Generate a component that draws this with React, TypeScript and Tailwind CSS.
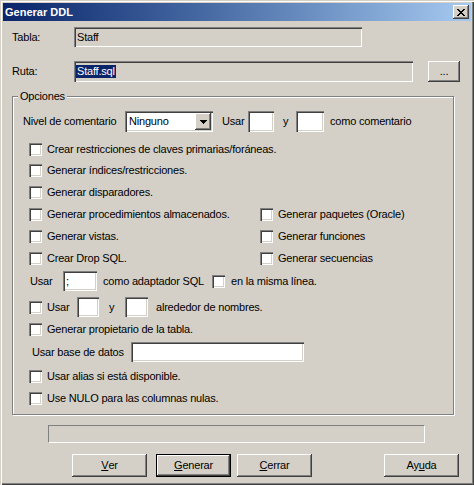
import type { ReactNode } from "react";

const FONT = "font-['Liberation_Sans',Arial,sans-serif]";
const SUNKEN =
  "shadow-[inset_1px_1px_#808080,inset_2px_2px_#404040,inset_-1px_-1px_#ffffff,inset_-2px_-2px_#d4d0c8]";
const RAISED =
  "shadow-[inset_-1px_-1px_#404040,inset_1px_1px_#ffffff,inset_-2px_-2px_#808080,inset_2px_2px_#d4d0c8]";

// classic 8x7 close glyph
const CLOSE_ROWS = ["11000011", "01100110", "00111100", "00011000", "00111100", "01100110", "11000011"];

function CloseGlyph() {
  return (
    <svg width="8" height="7" viewBox="0 0 8 7" shapeRendering="crispEdges">
      {CLOSE_ROWS.flatMap((row, y) =>
        row.split("").map((c, x) => (c === "1" ? <rect key={`${x}-${y}`} x={x} y={y} width="1" height="1" fill="#000" /> : null)),
      )}
    </svg>
  );
}

function Check() {
  return <span className={`block h-[13px] w-[13px] shrink-0 bg-white ${SUNKEN}`} />;
}

function CheckItem({ label }: { label: string }) {
  return (
    <div className="flex items-center">
      <Check />
      <span className="ml-[5px] whitespace-nowrap">{label}</span>
    </div>
  );
}

function Field({ className, children }: { className: string; children?: ReactNode }) {
  return <div className={`flex items-center bg-white ${SUNKEN} ${className}`}>{children}</div>;
}

function Btn({ children, isDefault = false }: { children: ReactNode; isDefault?: boolean }) {
  return (
    <button
      className={`flex h-[23px] w-[75px] items-center justify-center bg-[#d4d0c8] ${RAISED} ${
        isDefault ? "border border-black" : ""
      }`}
    >
      {children}
    </button>
  );
}

export default function App() {
  return (
    <div
      className={`flex h-[485px] w-[474px] flex-col bg-[#d4d0c8] p-[3px] text-[11px] leading-[13px] tracking-[-0.2px] text-black ${FONT} shadow-[inset_1px_1px_#d4d0c8,inset_2px_2px_#ffffff,inset_-1px_-1px_#404040,inset_-2px_-2px_#808080]`}
    >
      {/* Title bar */}
      <div className="flex h-[18px] items-center justify-between bg-linear-to-r from-[#0a246a] to-[#a6caf0] pl-[2px] pr-[2px]">
        <span className="font-bold tracking-normal text-white">Generar DDL</span>
        <button className={`flex h-[14px] w-[16px] items-center justify-center bg-[#d4d0c8] ${RAISED}`}>
          <CloseGlyph />
        </button>
      </div>

      {/* Tabla */}
      <div className="mt-[6px] flex h-[20px] items-center">
        <span className="ml-[9px] w-[62px]">Tabla:</span>
        <div className={`flex h-[20px] w-[288px] items-center bg-[#d4d0c8] pl-[3px] ${SUNKEN}`}>Staff</div>
      </div>

      {/* Ruta */}
      <div className="mt-[14px] flex h-[21px] items-center">
        <span className="ml-[9px] w-[62px]">Ruta:</span>
        <div className={`flex h-[21px] w-[339px] items-center bg-[#d4d0c8] pl-[2px] ${SUNKEN}`}>
          <span className="bg-[#0a246a] px-[1px] leading-[13px] text-white">Staff.sql</span>
        </div>
        <button className={`ml-[15px] flex h-[21px] w-[32px] items-center justify-center bg-[#d4d0c8] ${RAISED}`}>
          ...
        </button>
      </div>

      {/* Opciones */}
      <div className="relative ml-[9px] mt-[14px] flex h-[319px] w-[442px] flex-col border border-[#808080] shadow-[inset_1px_1px_#ffffff,1px_1px_#ffffff]">
        <span className="absolute -top-[7px] left-[5px] bg-[#d4d0c8] px-[2px] leading-[13px]">Opciones</span>

        <div className="mt-[14px] flex h-[21px] items-center">
          <span className="ml-[10px] w-[102px] whitespace-nowrap">Nivel de comentario</span>
          <Field className="h-[21px] w-[88px] pl-[4px]">
            <span>Ninguno</span>
            <span className={`ml-auto mr-[2px] flex h-[17px] w-[16px] items-center justify-center bg-[#d4d0c8] ${RAISED}`}>
              <svg width="7" height="4" viewBox="0 0 7 4" shapeRendering="crispEdges">
                <path d="M0 0h7v1H0zM1 1h5v1H1zM2 2h3v1H2zM3 3h1v1H3z" fill="#000" />
              </svg>
            </span>
          </Field>
          <span className="ml-[9px] w-[26px]">Usar</span>
          <Field className="h-[21px] w-[26px]" />
          <span className="ml-[9px] w-[13px]">y</span>
          <Field className="h-[21px] w-[28px]" />
          <span className="ml-[6px] whitespace-nowrap">como comentario</span>
        </div>

        <div className="ml-[16px] mt-[11px] flex h-[13px] items-center">
          <CheckItem label="Crear restricciones de claves primarias/foráneas." />
        </div>
        <div className="ml-[16px] mt-[8px] flex h-[13px] items-center">
          <CheckItem label="Generar índices/restricciones." />
        </div>
        <div className="ml-[16px] mt-[9px] flex h-[13px] items-center">
          <CheckItem label="Generar disparadores." />
        </div>
        <div className="ml-[16px] mt-[9px] flex h-[13px] items-center">
          <div className="w-[231px]">
            <CheckItem label="Generar procedimientos almacenados." />
          </div>
          <CheckItem label="Generar paquetes (Oracle)" />
        </div>
        <div className="ml-[16px] mt-[9px] flex h-[13px] items-center">
          <div className="w-[231px]">
            <CheckItem label="Generar vistas." />
          </div>
          <CheckItem label="Generar funciones" />
        </div>
        <div className="ml-[16px] mt-[9px] flex h-[13px] items-center">
          <div className="w-[231px]">
            <CheckItem label="Crear Drop SQL." />
          </div>
          <CheckItem label="Generar secuencias" />
        </div>

        <div className="mt-[6px] flex h-[20px] items-center">
          <span className="ml-[17px] w-[33px]">Usar</span>
          <Field className="h-[20px] w-[34px] pl-[3px]">;</Field>
          <span className="ml-[6px] w-[109px] whitespace-nowrap">como adaptador SQL</span>
          <Check />
          <span className="ml-[6px] whitespace-nowrap">en la misma línea.</span>
        </div>

        <div className="ml-[16px] mt-[6px] flex h-[20px] items-center">
          <Check />
          <span className="ml-[5px] w-[30px]">Usar</span>
          <Field className="h-[20px] w-[22px]" />
          <span className="ml-[10px] w-[16px]">y</span>
          <Field className="h-[20px] w-[23px]" />
          <span className="ml-[8px] whitespace-nowrap">alrededor de nombres.</span>
        </div>

        <div className="ml-[16px] mt-[6px] flex h-[13px] items-center">
          <CheckItem label="Generar propietario de la tabla." />
        </div>

        <div className="mt-[6px] flex h-[20px] items-center">
          <span className="ml-[19px] w-[99px] whitespace-nowrap">Usar base de datos</span>
          <Field className="h-[20px] w-[173px]" />
        </div>

        <div className="ml-[16px] mt-[8px] flex h-[13px] items-center">
          <CheckItem label="Usar alias si está disponible." />
        </div>
        <div className="ml-[16px] mt-[9px] flex h-[13px] items-center">
          <CheckItem label="Use NULO para las columnas nulas." />
        </div>
      </div>

      {/* Progress */}
      <div className="ml-[45px] mt-[10px] h-[18px] w-[377px] border border-b-white border-l-[#808080] border-r-white border-t-[#808080]" />

      {/* Buttons */}
      <div className="mt-[11px] flex h-[23px] items-center">
        <div className="ml-[69px]">
          <Btn>
            <span className="underline">V</span>er
          </Btn>
        </div>
        <div className="ml-[9px]">
          <Btn isDefault>
            <span className="underline">G</span>enerar
          </Btn>
        </div>
        <div className="ml-[6px]">
          <Btn>
            <span className="underline">C</span>errar
          </Btn>
        </div>
        <div className="ml-[72px]">
          <Btn>
            Ay<span className="underline">u</span>da
          </Btn>
        </div>
      </div>
    </div>
  );
}
